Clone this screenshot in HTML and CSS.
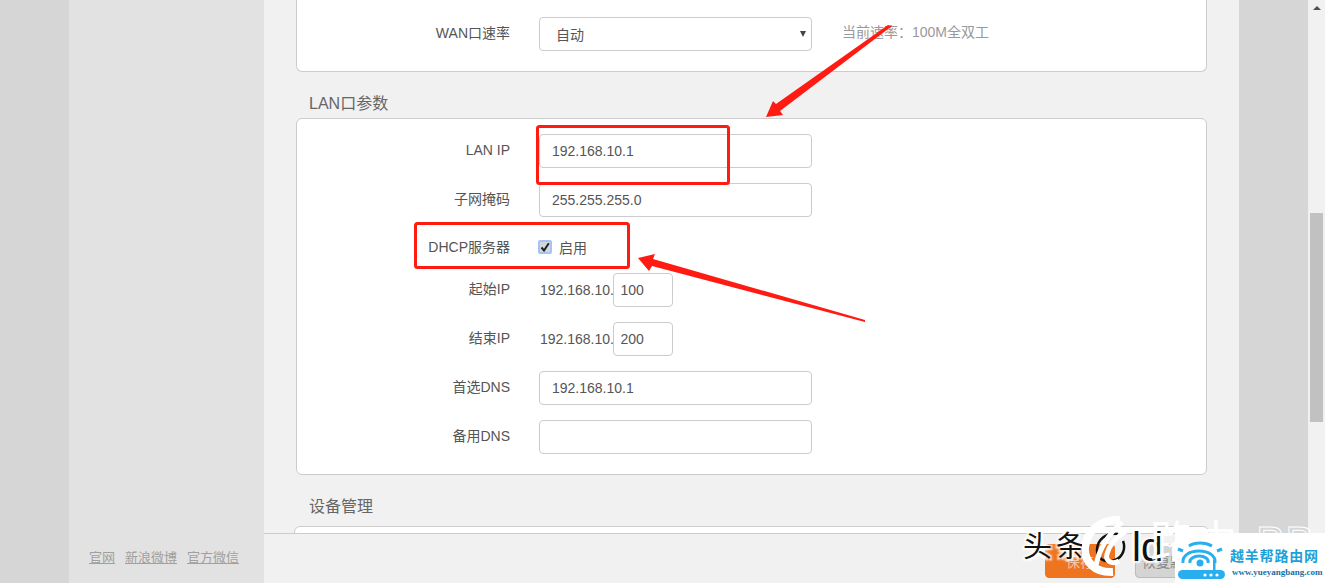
FILE: index.html
```html
<!DOCTYPE html>
<html lang="zh-CN">
<head>
<meta charset="utf-8">
<title>路由器设置</title>
<link rel="stylesheet" href="styles.css">
</head>
<body>
<div class="page">
  <aside class="sidebar">
    <nav class="side-links">
      <a href="#">官网</a>
      <a href="#">新浪微博</a>
      <a href="#">官方微信</a>
    </nav>
  </aside>

  <main class="main">
    <section class="panel panel-first">
      <div class="row">
        <label class="label">WAN口速率</label>
        <div class="select-wrap">
          <select class="control select"><option>自动</option></select>
        </div>
        <span class="hint">当前速率：100M全双工</span>
      </div>
    </section>

    <h2 class="section-title">LAN口参数</h2>
    <section class="panel panel-lan">
      <div class="row">
        <label class="label">LAN IP</label>
        <input class="control" value="192.168.10.1">
      </div>
      <div class="row">
        <label class="label">子网掩码</label>
        <input class="control" value="255.255.255.0">
      </div>
      <div class="row row-check">
        <label class="label">DHCP服务器</label>
        <span class="check-box">
          <svg width="10" height="10" viewBox="0 0 10 10"><path class="check-mark" d="M1.5 5.5 4 8.5 8.8 1.2"/></svg>
        </span>
        <span class="check-text">启用</span>
      </div>
      <div class="row">
        <label class="label">起始IP</label>
        <span class="prefix">192.168.10.</span>
        <input class="control control-small" value="100">
      </div>
      <div class="row">
        <label class="label">结束IP</label>
        <span class="prefix">192.168.10.</span>
        <input class="control control-small" value="200">
      </div>
      <div class="row">
        <label class="label">首选DNS</label>
        <input class="control" value="192.168.10.1">
      </div>
      <div class="row">
        <label class="label">备用DNS</label>
        <input class="control" value="">
      </div>
    </section>

    <h2 class="section-title section-title-2">设备管理</h2>
    <section class="panel panel-device"></section>

    <footer class="action-bar">
      <button class="btn btn-primary">保存</button>
      <button class="btn btn-default">恢复默认</button>
    </footer>
  </main>

  <div class="gutter"></div>

  <div class="scrollbar">
    <span class="scroll-up"></span>
    <span class="scroll-thumb"></span>
  </div>

  <svg class="annotations" width="1325" height="583" viewBox="0 0 1325 583">
    <rect class="mark-box" x="537.5" y="126.5" width="191" height="57" rx="2"/>
    <rect class="mark-box" x="415.5" y="223.5" width="213" height="44" rx="2"/>
    <polygon class="mark-arrow" points="892,26 780,111 783,115 766,117 773,101 776,104 888,25"/>
    <polygon class="mark-arrow" points="638,258 655,254 653,259 865,320 865,322 652,266 649,271"/>
  </svg>

  <div class="watermark">
    <span class="wm-head">头条</span>
    <svg class="wm-swirl" width="50" height="66" viewBox="0 0 50 66">
      <path class="swirl-white" d="M38 5C20 4 5 15 3 32 2 46 12 58 31 57"/>
      <path class="swirl-black" d="M36 19C24 17 15 25 15 35 15 44 24 49 33 45 41 42 44 33 41 26"/>
      <path class="swirl-white-thin" d="M40 7C26 20 18 32 14 50"/>
      <path class="swirl-white-thin" d="M44 16C35 22 27 30 25 39 23 46 30 50 37 46"/>
    </svg>
    <span class="wm-name">ld</span>
    <span class="wm-big">路由</span>
    <span class="wm-big wm-outline">BB</span>
  </div>

  <div class="logo">
    <svg class="logo-icon" width="50" height="50" viewBox="0 0 50 50">
      <path class="wifi-arc" d="M14 13C20 9 30 9 37 13"/>
      <path class="wifi-arc" d="M8 18 3 16M42 18 47 16"/>
      <path class="wifi-arc" d="M8 30C7 23 14 18 24 18 34 18 41 23 40 30"/>
      <path class="wifi-arc" d="M15 30C14 26 19 23 24 23 30 23 34 26 33 30"/>
      <circle class="wifi-fill" cx="25" cy="30" r="3.5"/>
      <rect class="wifi-fill" x="38" y="27" width="2.5" height="10"/>
      <rect class="wifi-fill" x="3" y="37" width="47" height="9" rx="4.5"/>
      <circle class="wifi-dot" cx="30" cy="42" r="1.6"/>
      <circle class="wifi-dot" cx="36" cy="42" r="1.6"/>
      <circle class="wifi-dot" cx="42" cy="42" r="1.6"/>
    </svg>
    <div class="logo-text">
      <span class="logo-name">越羊帮路由网</span>
      <span class="logo-url">www.yueyangbang.com</span>
    </div>
  </div>
</div>
</body>
</html>
```

FILE: styles.css
```css
* { box-sizing: border-box; }

html, body {
  margin: 0;
  height: 100%;
  overflow: hidden;
}

body {
  font-family: "Liberation Sans", "Noto Sans CJK SC", sans-serif;
  font-size: 14px;
  color: #555;
  background: #d6d6d6;
}

.page {
  position: relative;
  display: flex;
  width: 1325px;
  height: 583px;
  padding-left: 69px;
  overflow: hidden;
}

/* sidebar */
.sidebar {
  flex: 0 0 195px;
  display: flex;
  flex-direction: column;
  justify-content: flex-end;
  padding: 0 0 16px 20px;
  background: #e2e2e2;
}

.side-links {
  display: flex;
  gap: 10px;
  font-size: 13px;
  line-height: 18px;
}

.side-links a {
  color: #a0a0a0;
}

/* main column */
.main {
  position: relative;
  flex: 0 0 975px;
  height: 583px;
  padding: 0 32px;
  overflow: hidden;
  background: #f1f1f1;
}

.gutter {
  flex: 0 0 69px;
}

.panel {
  background: #fff;
  border: 1px solid #ccc;
  border-radius: 6px;
}

.panel-first {
  height: 72px;
  padding-top: 17px;
  border-top: 0;
  border-top-left-radius: 0;
  border-top-right-radius: 0;
}

.panel-lan {
  display: flex;
  flex-direction: column;
  gap: 15px;
  height: 357px;
  padding-top: 15px;
}

.panel-device {
  height: 60px;
  margin: 0 -2px;
}

.section-title {
  margin: 23px 0 5px 13px;
  font-size: 16px;
  font-weight: 400;
  line-height: 18px;
  color: #666;
}

.section-title-2 {
  margin-top: 23px;
  margin-bottom: 10px;
}

/* form rows */
.row {
  display: flex;
  align-items: center;
  height: 34px;
}

.row-check {
  height: 26px;
  padding-top: 4px;
}

.label {
  flex: 0 0 213px;
  padding-bottom: 2px;
  text-align: right;
  line-height: 20px;
  color: #555;
}

.row-check .label {
  padding-bottom: 0;
}

.control {
  width: 273px;
  height: 34px;
  margin-left: 29px;
  padding: 0 12px;
  border: 1px solid #ccc;
  border-radius: 4px;
  font: inherit;
  color: #555;
  background: #fff;
  outline: none;
}

.control-small {
  width: 60px;
  margin-left: 0;
  padding: 0 6.5px;
}

.select-wrap {
  position: relative;
  margin-left: 29px;
}

.select-wrap::after {
  content: "";
  position: absolute;
  top: 14px;
  right: 6px;
  border: 3.5px solid transparent;
  border-top: 6px solid #444;
  border-bottom: 0;
}

.select {
  display: block;
  margin: 0;
  padding: 2px 0 0 16px;
  appearance: none;
}

.hint {
  margin: 0 0 7px 30px;
  color: #999;
}

.prefix {
  margin-left: 30px;
  width: 73px;
  white-space: nowrap;
}

.check-box {
  display: flex;
  align-items: center;
  justify-content: center;
  width: 14px;
  height: 14px;
  margin-left: 28px;
  border: 2px solid #a6c3f2;
  border-radius: 2px;
  background: #d3d6dc;
}

.check-mark {
  fill: none;
  stroke: #222;
  stroke-width: 2;
}

.check-text {
  margin-left: 7px;
}

/* action bar */
.action-bar {
  position: absolute;
  left: 0;
  right: 0;
  bottom: 0;
  display: flex;
  justify-content: flex-end;
  gap: 20px;
  height: 50px;
  padding: 10px 34px 0 0;
  border-top: 1px solid #ccc;
  background: #f1f1f1;
}

.btn {
  width: 70px;
  height: 34px;
  border-radius: 4px;
  font: inherit;
}

.btn-primary {
  border: 1px solid #ec7320;
  color: #f3c6a4;
  background: #ee7420;
}

.btn-default {
  border: 1px solid #bbb;
  color: #888;
  background: #d4d4d4;
}

/* browser scrollbar */
.scrollbar {
  position: relative;
  flex: 0 0 17px;
  background: #f1f1f1;
}

.scroll-up {
  position: absolute;
  top: 6px;
  left: 5px;
  border: 4px solid transparent;
  border-top: 0;
  border-bottom: 4px solid #505050;
}

.scroll-thumb {
  position: absolute;
  top: 213px;
  left: 2px;
  width: 13px;
  height: 209px;
  background: #c1c1c1;
}

/* screenshot annotations */
.annotations {
  position: absolute;
  top: 0;
  left: 0;
  pointer-events: none;
}

.mark-box {
  fill: none;
  stroke: #ff1a12;
  stroke-width: 3;
}

.mark-arrow {
  fill: #ff1a12;
}

/* burned-in watermark */
.watermark {
  position: absolute;
  top: 510px;
  left: 1020px;
  width: 305px;
  height: 73px;
}

.wm-head,
.wm-name {
  position: absolute;
  top: 17px;
  line-height: 40px;
  color: #111;
  text-shadow: 2px 2px 2px #fff, -2px -1px 2px #fff, 2px -1px 2px #fff, -2px 2px 2px #fff;
}

.wm-head {
  left: 3px;
  font-size: 29px;
  letter-spacing: 4px;
  white-space: nowrap;
}

.wm-name {
  left: 112px;
  font-size: 40px;
}

.wm-swirl {
  position: absolute;
  top: 5px;
  left: 62px;
}

.swirl-white {
  fill: none;
  stroke: #fff;
  stroke-width: 8;
}

.swirl-black {
  fill: none;
  stroke: #111;
  stroke-width: 2.5;
}

.swirl-white-thin {
  fill: none;
  stroke: #fff;
  stroke-width: 5;
}

.wm-big {
  position: absolute;
  top: 8px;
  left: 130px;
  font-size: 44px;
  line-height: 50px;
  white-space: nowrap;
  color: #fff;
}

.wm-outline {
  left: 236px;
  color: transparent;
  -webkit-text-stroke: 1px #fff;
}

/* site logo */
.logo {
  position: absolute;
  top: 533px;
  left: 1175px;
  display: flex;
  width: 150px;
  height: 50px;
  background: #fff;
}

.logo-icon {
  flex: 0 0 50px;
}

.logo-text {
  display: flex;
  flex-direction: column;
  padding: 15px 0 0 5px;
}

.logo-name {
  font-size: 14px;
  font-weight: 700;
  line-height: 17px;
  letter-spacing: .8px;
  white-space: nowrap;
  color: #1f9fd8;
}

.logo-url {
  margin: 2px 0 0 2px;
  font-family: "Liberation Serif", serif;
  font-size: 9px;
  font-weight: 700;
  line-height: 10px;
  white-space: nowrap;
  color: #1b6f9f;
}

.wifi-arc {
  fill: none;
  stroke: #29aef0;
  stroke-width: 3;
}

.wifi-fill {
  fill: #29aef0;
}

.wifi-dot {
  fill: #fff;
}
```
